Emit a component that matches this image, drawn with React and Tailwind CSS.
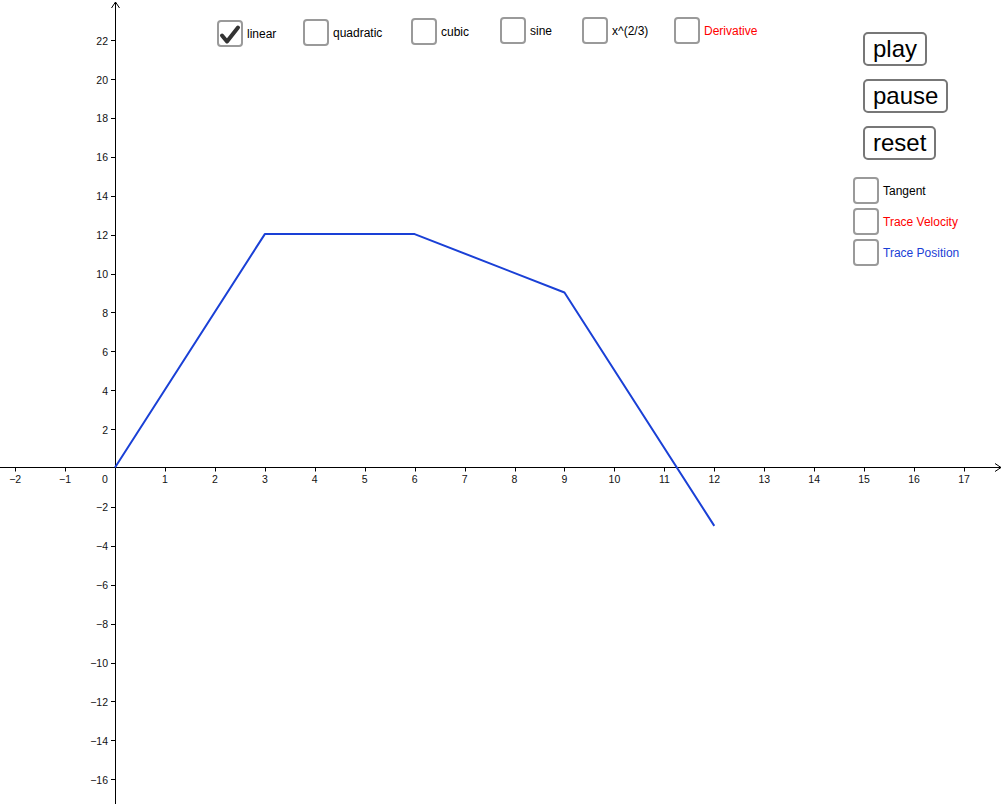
const X0 = 115
const Y0 = 468.5
const SX = 49.94
const SY = 19.45

const px = (u) => X0 + u * SX
const py = (v) => Y0 - v * SY

const AXIS_Y = 467.5

const xTicks = Array.from({ length: 20 }, (_, i) => i - 2).filter((n) => n !== 0)
const yTicks = Array.from({ length: 20 }, (_, i) => i * 2 - 16).filter((n) => n !== 0)

const path = [[0, 0], [3, 12], [6, 12], [9, 9], [12, -3]]

const topBoxes = [
  { label: 'linear', left: 217, top: 20, checked: true },
  { label: 'quadratic', left: 303, top: 19 },
  { label: 'cubic', left: 411, top: 18 },
  { label: 'sine', left: 500, top: 17 },
  { label: 'x^(2/3)', left: 582, top: 17 },
  { label: 'Derivative', left: 674, top: 17, color: 'text-[#ff0000]' },
]

const sideBoxes = [
  { label: 'Tangent', color: 'text-black' },
  { label: 'Trace Velocity', color: 'text-[#ff0000]' },
  { label: 'Trace Position', color: 'text-[#1a40d6]' },
]

const fmt = (n) => (n < 0 ? '\u2212' + Math.abs(n) : String(n))

function Box({ checked }) {
  return (
    <span className="w-[26px] h-[27px] shrink-0 rounded-[4px] border-2 border-[#9a9a9a] bg-white flex items-center justify-center">
      {checked && (
        <svg width="22" height="22" viewBox="0 0 22 22">
          <path d="M3 12.5 L8 18.5 L19 4.5" fill="none" stroke="#333" strokeWidth="4" strokeLinecap="round" strokeLinejoin="round" />
        </svg>
      )}
    </span>
  )
}

function Graph() {
  return (
    <svg width="1004" height="804" className="block" style={{ fontFamily: '"Liberation Sans", Arial, sans-serif' }}>
      {/* axes */}
      <line x1="0" y1={AXIS_Y} x2="1001" y2={AXIS_Y} stroke="#000" strokeWidth="1" />
      <polyline points={`995,${AXIS_Y - 4} 1001,${AXIS_Y} 995,${AXIS_Y + 4}`} fill="none" stroke="#000" strokeWidth="1" />
      <line x1={X0 + 0.5} y1="804" x2={X0 + 0.5} y2="2" stroke="#000" strokeWidth="1" />
      <polyline points={`${X0 - 3.5},8 ${X0 + 0.5},2 ${X0 + 4.5},8`} fill="none" stroke="#000" strokeWidth="1" />

      {xTicks.map((n) => (
        <g key={'x' + n}>
          <line x1={Math.round(px(n)) + 0.5} y1={AXIS_Y} x2={Math.round(px(n)) + 0.5} y2={AXIS_Y + 4} stroke="#000" />
          <text x={px(n)} y={AXIS_Y + 15} fontSize="10.5" textAnchor="middle" fill="#111">{fmt(n)}</text>
        </g>
      ))}
      <text x={X0 - 10} y={AXIS_Y + 15} fontSize="10.5" textAnchor="middle" fill="#111">0</text>

      {yTicks.map((n) => (
        <g key={'y' + n}>
          <line x1={X0 - 4} y1={Math.floor(py(n)) + 0.5} x2={X0} y2={Math.floor(py(n)) + 0.5} stroke="#000" />
          <text x={X0 - 7} y={py(n) + 4} fontSize="10.5" textAnchor="end" fill="#111">{fmt(n)}</text>
        </g>
      ))}

      <polyline
        points={path.map(([u, v]) => `${px(u)},${py(v) - 1}`).join(' ')}
        fill="none"
        stroke="#1a40d6"
        strokeWidth="2"
        strokeLinejoin="round"
      />
    </svg>
  )
}

export default function App() {
  return (
    <div className="relative w-[1004px] h-[804px] overflow-hidden bg-white font-['Liberation_Sans',Arial,sans-serif]">
      <Graph />

      {topBoxes.map((b) => (
        <label
          key={b.label}
          className="absolute flex items-center gap-[4px] text-[12px] leading-none cursor-pointer"
          style={{ left: b.left, top: b.top }}
        >
          <Box checked={b.checked} />
          <span className={b.color || 'text-black'}>{b.label}</span>
        </label>
      ))}

      <div className="absolute left-[863px] top-[32px] flex flex-col items-start gap-[13px]">
        {['play', 'pause', 'reset'].map((t) => (
          <button
            key={t}
            className="h-[34px] px-[8px] border-2 border-[#777] rounded-[5px] bg-white text-[24px] leading-none text-black flex items-center"
          >
            {t}
          </button>
        ))}
      </div>

      <div className="absolute left-[853px] top-[177px] flex flex-col gap-[4px]">
        {sideBoxes.map((b) => (
          <label key={b.label} className="flex items-center gap-[4px] text-[12px] leading-none cursor-pointer">
            <Box />
            <span className={b.color}>{b.label}</span>
          </label>
        ))}
      </div>
    </div>
  )
}
